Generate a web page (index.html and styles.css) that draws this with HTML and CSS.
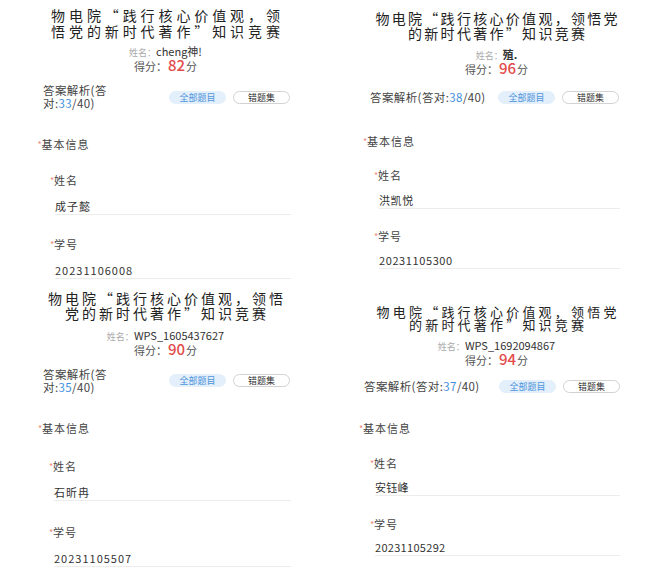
FILE: index.html
```html
<!DOCTYPE html>
<html lang="zh-CN">

<head>
    <meta charset="UTF-8">
    <meta name="viewport" content="width=device-width, initial-scale=1.0">
    <title>知识竞赛成绩</title>
    <link rel="stylesheet" href="styles.css">
</head>

<body>
    <div class="collage">
        <!-- 左上 -->
        <section class="shot shot-1">
            <h1 class="title">物电院“践行核心价值观，领<br>悟党的新时代著作”知识竞赛</h1>
            <p class="meta"><span class="meta-label">姓名：</span>cheng神!</p>
            <p class="score">得分：<em>82</em>分</p>
            <div class="answer-row">
                <div class="answer">答案解析(答<br>对:<b>33</b>/40)</div>
                <div class="tabs"><span class="tab active">全部题目</span><span class="tab">错题集</span></div>
            </div>
            <div class="form">
                <div class="section-label"><i>*</i>基本信息</div>
                <div class="field">
                    <div class="field-label"><i>*</i>姓名</div>
                    <div class="field-value">成子懿</div>
                </div>
                <div class="field">
                    <div class="field-label"><i>*</i>学号</div>
                    <div class="field-value">20231106008</div>
                </div>
            </div>
        </section>

        <!-- 右上 -->
        <section class="shot shot-2">
            <h1 class="title">物电院“践行核心价值观，领悟党<br>的新时代著作”知识竞赛</h1>
            <p class="meta"><span class="meta-label">姓名：</span><strong>殖.</strong></p>
            <p class="score">得分：<em>96</em>分</p>
            <div class="answer-row">
                <div class="answer">答案解析(答对:<b>38</b>/40)</div>
                <div class="tabs"><span class="tab active">全部题目</span><span class="tab">错题集</span></div>
            </div>
            <div class="form">
                <div class="section-label"><i>*</i>基本信息</div>
                <div class="field">
                    <div class="field-label"><i>*</i>姓名</div>
                    <div class="field-value">洪凯悦</div>
                </div>
                <div class="field">
                    <div class="field-label"><i>*</i>学号</div>
                    <div class="field-value">20231105300</div>
                </div>
            </div>
        </section>

        <!-- 左下 -->
        <section class="shot shot-3">
            <h1 class="title">物电院“践行核心价值观，领悟<br>党的新时代著作”知识竞赛</h1>
            <p class="meta"><span class="meta-label">姓名：</span>WPS_1605437627</p>
            <p class="score">得分：<em>90</em>分</p>
            <div class="answer-row">
                <div class="answer">答案解析(答<br>对:<b>35</b>/40)</div>
                <div class="tabs"><span class="tab active">全部题目</span><span class="tab">错题集</span></div>
            </div>
            <div class="form">
                <div class="section-label"><i>*</i>基本信息</div>
                <div class="field">
                    <div class="field-label"><i>*</i>姓名</div>
                    <div class="field-value">石昕冉</div>
                </div>
                <div class="field">
                    <div class="field-label"><i>*</i>学号</div>
                    <div class="field-value">20231105507</div>
                </div>
            </div>
        </section>

        <!-- 右下 -->
        <section class="shot shot-4">
            <h1 class="title">物电院“践行核心价值观，领悟党<br>的新时代著作”知识竞赛</h1>
            <p class="meta"><span class="meta-label">姓名：</span>WPS_1692094867</p>
            <p class="score">得分：<em>94</em>分</p>
            <div class="answer-row">
                <div class="answer">答案解析(答对:<b>37</b>/40)</div>
                <div class="tabs"><span class="tab active">全部题目</span><span class="tab">错题集</span></div>
            </div>
            <div class="form">
                <div class="section-label"><i>*</i>基本信息</div>
                <div class="field">
                    <div class="field-label"><i>*</i>姓名</div>
                    <div class="field-value">安钰峰</div>
                </div>
                <div class="field">
                    <div class="field-label"><i>*</i>学号</div>
                    <div class="field-value">20231105292</div>
                </div>
            </div>
        </section>
    </div>
</body>

</html>
```

FILE: styles.css
```css
body {
    margin: 0;
    background-color: #fff;
    font-family: "Noto Sans CJK SC", "Noto Sans", sans-serif;
    color: #333;
}

.collage {
    display: grid;
    grid-template-columns: 331px 331px;
    grid-template-rows: 280px 287px;
}

/* each screenshot tunes its own spacing */
.shot {
    overflow: hidden;
    padding-top: var(--pt);
    box-sizing: border-box;
}

.shot-1 {
    --pt: 6.5px; --tfs: 14px; --tlh: 16.7px; --tls: 3.9px; --mg: 5.5px;
    --ag: 12px; --al: 43px; --pr: 41px; --sg: 27px; --sb: 2px;
    --fl: 37.5px; --fr: 40px; --fi: 12.5px; --fg: 22px; --vg: 12px; --vls: 1px;
}

.shot-2 {
    --pt: 10.8px; --tfs: 14px; --tlh: 15px; --tls: 2.3px; --mg: 7.7px;
    --ag: 8.7px; --al: 39px; --pr: 43px; --sg: 24px; --sb: 3px;
    --fl: 32px; --fr: 42px; --fi: 11px; --fg: 20px; --vg: 10.5px; --vls: 0.6px;
}

.shot-3 {
    --pt: 10.8px; --tfs: 14px; --tlh: 15px; --tls: 3px; --mg: 8.7px;
    --ag: 11.5px; --al: 43px; --pr: 41px; --sg: 27px; --sb: 4px;
    --fl: 38px; --fr: 40px; --fi: 11px; --fg: 24px; --vg: 12px; --vls: 1px;
}

.shot-4 {
    --pt: 25px; --tfs: 13px; --tlh: 13.3px; --tls: 3.2px; --mg: 7px;
    --ag: 8px; --al: 33px; --pr: 42px; --sg: 21.5px; --sb: 3px;
    --fl: 28px; --fr: 42px; --fi: 11px; --fg: 21px; --vg: 9.5px; --vls: 0.3px;
}

.title {
    margin: 0;
    padding-left: var(--tls);
    font-size: var(--tfs);
    line-height: var(--tlh);
    letter-spacing: var(--tls);
    font-weight: 400;
    text-align: center;
    color: #222;
}

.meta {
    margin: var(--mg) 0 0;
    height: 13px;
    font-size: 11px;
    line-height: 13px;
    text-align: center;
    color: #333;
}

.meta-label {
    font-size: 9px;
    color: #aaa;
}

.meta strong {
    font-weight: 700;
}

.score {
    margin: 0;
    height: 14px;
    font-size: 11px;
    line-height: 14px;
    text-align: center;
    color: #555;
}

.score em {
    font-style: normal;
    font-size: 15px;
    font-weight: 500;
    color: #e24b4a;
    margin: 0 1px;
}

.answer-row {
    display: flex;
    align-items: center;
    height: 26px;
    margin-top: var(--ag);
    padding: 0 var(--pr) 0 var(--al);
}

.answer {
    font-size: 11.5px;
    line-height: 13px;
    letter-spacing: 0.4px;
    color: #444;
}

.answer b {
    font-weight: 400;
    color: #3f8fdc;
}

.tabs {
    margin-left: auto;
    display: flex;
    gap: 7px;
}

.tab {
    width: 57px;
    height: 13px;
    box-sizing: border-box;
    border: 1px solid #d2d2d2;
    border-radius: 7px;
    font-size: 9px;
    line-height: 11px;
    text-align: center;
    color: #333;
}

.tab.active {
    background-color: #e3effa;
    border-color: #e3effa;
    color: #4d94dc;
}

.form {
    padding: var(--sg) var(--fr) 0 var(--fl);
}

.form i {
    display: inline-block;
    width: 4px;
    font-style: normal;
    font-size: 9px;
    line-height: 16px;
    vertical-align: top;
    color: #ee8a7c;
}

.section-label {
    height: 14px;
    margin-bottom: var(--sb);
    font-size: 11px;
    line-height: 14px;
    letter-spacing: 1px;
    color: #444;
}

.field {
    margin-top: var(--fg);
    padding-left: var(--fi);
}

.field-label {
    height: 14px;
    font-size: 11px;
    line-height: 14px;
    letter-spacing: 1px;
    color: #444;
}

.field-value {
    height: 14px;
    margin: var(--vg) 0 0 5px;
    padding-bottom: 1px;
    border-bottom: 1px solid #ececec;
    font-size: 11px;
    line-height: 14px;
    letter-spacing: var(--vls);
}
```
